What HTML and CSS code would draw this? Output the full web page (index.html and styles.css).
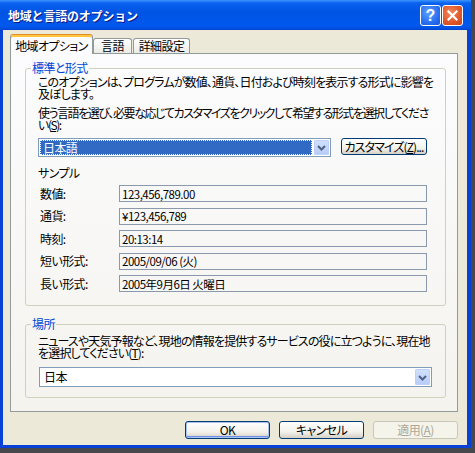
FILE: index.html
```html
<!DOCTYPE html>
<html lang="ja">
<head>
    <meta charset="UTF-8">
    <title>地域と言語のオプション</title>
    <link rel="stylesheet" href="styles.css">
</head>
<body>
    <div class="window">
        <div class="titlebar">
            <span class="title">地域と言語のオプション</span>
            <div class="title-buttons">
                <button class="tb-btn help">?</button>
                <button class="tb-btn close">
                    <svg width="19" height="19" viewBox="0 0 19 19"><path d="M5.5 5.5 L13.5 13.5 M13.5 5.5 L5.5 13.5" stroke="#fff" stroke-width="2.2" stroke-linecap="square"/></svg>
                </button>
            </div>
        </div>

        <div class="frame">
            <div class="tabs">
                <div class="tab active">地域オプション</div>
                <div class="tab">言語</div>
                <div class="tab">詳細設定</div>
            </div>

            <div class="panel">
                <fieldset class="group group-format">
                    <legend>標準と形式</legend>
                    <p class="note">このオプションは、プログラムが数値、通貨、日付および時刻を表示する形式に影響を<br>及ぼします。</p>
                    <p class="note second">使う言語を選び、必要な応じてカスタマイズをクリックして希望する形式を選択してくださ<br>い(<u>S</u>):</p>

                    <div class="combo-row">
                        <div class="combo">
                            <span class="combo-value selected">日本語</span>
                            <span class="combo-btn">
                                <svg width="15" height="17" viewBox="0 0 15 17"><path d="M4 7 L7.5 10.5 L11 7" stroke="#4d6185" stroke-width="2" fill="none"/></svg>
                            </span>
                        </div>
                        <button class="btn customize">カスタマイズ(<u>Z</u>)...</button>
                    </div>

                    <div class="sample-title">サンプル</div>
                    <div class="samples">
                        <span class="sample-label">数値:</span>
                        <span class="sample-value">123,456,789.00</span>
                        <span class="sample-label">通貨:</span>
                        <span class="sample-value">¥123,456,789</span>
                        <span class="sample-label">時刻:</span>
                        <span class="sample-value">20:13:14</span>
                        <span class="sample-label">短い形式:</span>
                        <span class="sample-value">2005/09/06 (火)</span>
                        <span class="sample-label">長い形式:</span>
                        <span class="sample-value">2005年9月6日 火曜日</span>
                    </div>
                </fieldset>

                <fieldset class="group group-location">
                    <legend>場所</legend>
                    <p class="note">ニュースや天気予報など、現地の情報を提供するサービスの役に立つように、現在地<br>を選択してください(<u>T</u>):</p>
                    <div class="combo wide">
                        <span class="combo-value">日本</span>
                        <span class="combo-btn">
                            <svg width="15" height="17" viewBox="0 0 15 17"><path d="M4 7 L7.5 10.5 L11 7" stroke="#4d6185" stroke-width="2" fill="none"/></svg>
                        </span>
                    </div>
                </fieldset>
            </div>

            <div class="actions">
                <button class="btn default">OK</button>
                <button class="btn">キャンセル</button>
                <button class="btn" disabled>適用(<u>A</u>)</button>
            </div>
        </div>
    </div>
</body>
</html>
```

FILE: styles.css
```css
html, body {
    margin: 0;
    width: 475px;
    height: 453px;
    overflow: hidden;
    background: #46484e;
}
body {
    font-family: "Noto Sans CJK JP", sans-serif;
    font-size: 12px;
    line-height: 12px;
    font-feature-settings: "palt";
    letter-spacing: -0.6px;
    color: #000;
}
.window {
    width: 471px;
    height: 448px;
    display: flex;
    flex-direction: column;
}

/* title bar */
.titlebar {
    height: 30px;
    flex: none;
    display: flex;
    align-items: center;
    justify-content: space-between;
    padding: 0 8px;
    background: linear-gradient(to bottom, #3d95ff 0%, #0a62ef 10%, #0054e3 40%, #0058ee 85%, #0050e0 95%, #003dd0 100%);
}
.title {
    color: #fff;
    font-weight: bold;
    font-feature-settings: normal;
    letter-spacing: -0.2px;
    text-shadow: 1px 1px #0a1883;
    margin-top: 2px;
}
.title-buttons {
    display: flex;
    gap: 1px;
    margin-top: 1px;
}
.tb-btn {
    width: 21px;
    height: 21px;
    border: 1px solid #fff;
    border-radius: 3px;
    padding: 0;
    display: flex;
    align-items: center;
    justify-content: center;
    color: #fff;
}
.help {
    background: radial-gradient(circle at 40% 35%, #5da2ff 0%, #2a6ff0 60%, #1a55d8 100%);
    font-family: "Liberation Sans", sans-serif;
    font-weight: bold;
    font-size: 16px;
    letter-spacing: 0;
}
.close {
    background: radial-gradient(circle at 40% 35%, #f08a62 0%, #e25a2c 55%, #c8431a 100%);
}

/* window body */
.frame {
    flex: 1;
    display: flex;
    flex-direction: column;
    background: #ece9d8;
    border: solid #0841d6;
    border-width: 0 4px 3px 3px;
    padding: 4px 9px 6px 7px;
}

.tabs {
    display: flex;
    align-items: flex-end;
    height: 20px;
    margin-bottom: -1px;
    position: relative;
    z-index: 1;
}
.tab {
    height: 15px;
    margin-bottom: 1px;
    padding: 0;
    display: flex;
    align-items: center;
    justify-content: center;
    white-space: nowrap;
    border: 1px solid #919b9c;
    border-bottom: none;
    border-radius: 3px 3px 0 0;
    background: linear-gradient(#fff, #ecebe6);
    box-sizing: border-box;
    margin-left: 1px;
}
.tab.active {
    width: 83px;
    height: 20px;
    margin: 0;
    padding-top: 2px;
    border-top: 1px solid #e68b2c;
    box-shadow: inset 0 2px 0 #ffc83c;
    background: #fcfcfe;
}
.tab:nth-child(2) {
    width: 39px;
    margin-left: 0;
}
.tab:nth-child(3) {
    width: 57px;
}

.panel {
    height: 359px;
    box-sizing: border-box;
    border: 1px solid #919b9c;
    background: linear-gradient(#fcfcfe, #f4f3ee);
    padding: 8px 11px 0 14px;
}

/* group boxes */
.group {
    margin: 0;
    min-width: 0;
    box-sizing: border-box;
    border: 1px solid #d0d0bf;
    border-radius: 3px;
    padding: 0 12px;
}
.group legend {
    color: #0046d5;
    padding: 0 1px;
    margin-left: -7px;
    line-height: 12px;
}
.group-format {
    height: 244px;
}
.group-location {
    height: 80px;
    margin-top: 12px;
}

.note {
    margin: 2px 0 0;
    white-space: nowrap;
    letter-spacing: -0.85px;
}
.note.second {
    margin-top: 7px;
    letter-spacing: -1.45px;
}
.group-location .note {
    margin-top: 5px;
}

/* combo boxes */
.combo-row {
    display: flex;
    align-items: flex-start;
    gap: 10px;
    margin-top: 7px;
}
.combo {
    width: 293px;
    height: 19px;
    box-sizing: border-box;
    border: 1px solid #7f9db9;
    background: #fff;
    padding: 1px;
    display: flex;
    gap: 2px;
}
.combo.wide {
    width: 393px;
    height: 20px;
    margin: 8px 0 0 1px;
}
.combo-value {
    flex: 1;
    display: flex;
    align-items: center;
    padding-left: 3px;
}
.combo-value.selected {
    background: #316ac5;
    color: #fff;
    outline: 1px dotted #fff;
    outline-offset: -1px;
}
.combo-btn {
    width: 15px;
    flex: none;
    border-radius: 2px;
    background: linear-gradient(#d3e1fd, #b5cbf7);
    box-shadow: inset 0 0 0 1px #bcd0f8;
    display: flex;
    align-items: center;
    justify-content: center;
}

/* push buttons */
.btn {
    font: inherit;
    font-feature-settings: "palt";
    letter-spacing: inherit;
    color: #000;
    height: 18px;
    padding: 0;
    white-space: nowrap;
    border: 1px solid #003c74;
    border-radius: 3px;
    background: linear-gradient(#ffffff 0%, #f3f2ec 60%, #d6d0c5 100%);
}
.btn.customize {
    width: 86px;
    height: 17px;
    letter-spacing: -0.9px;
}
.btn.default {
    box-shadow: inset 0 0 0 1px #a9c2f0, inset 0 -1px 0 1px #6f8ee6;
}
.btn:disabled {
    color: #aca899;
    border-color: #c9c7ba;
    background: #f5f4ea;
}

/* sample fields */
.sample-title {
    margin-top: 10px;
}
.samples {
    display: grid;
    grid-template-columns: 81px 308px;
    grid-auto-rows: 17px;
    row-gap: 5.5px;
    margin-top: 6px;
}
.sample-label {
    display: flex;
    align-items: center;
    padding-left: 2px;
}
.sample-value {
    display: flex;
    align-items: center;
    border: 1px solid #8a99ac;
    padding-left: 2px;
    font-size: 11.5px;
    letter-spacing: -0.5px;
}

.actions {
    display: flex;
    justify-content: flex-end;
    gap: 9px;
    margin-top: 9px;
}
.actions .btn {
    width: 85px;
}
```
